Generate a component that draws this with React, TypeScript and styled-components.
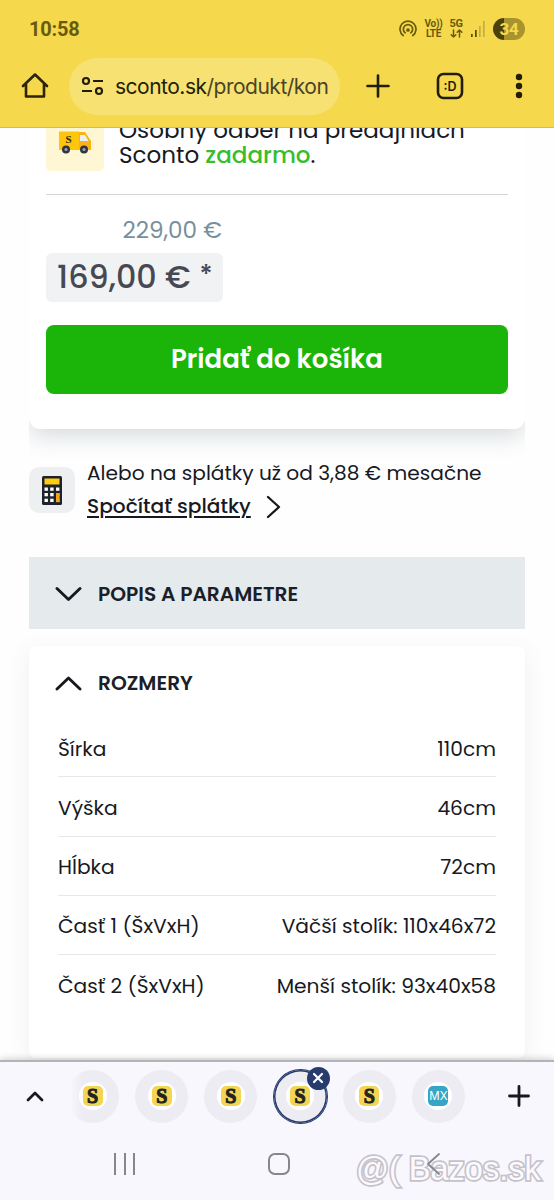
import React from "react";
import styled, { createGlobalStyle } from "styled-components";

const Global = createGlobalStyle`
  * { box-sizing: border-box; }
  body { margin: 0; background: #fff; font-family: Poppins, Inter, sans-serif; color: #17191f; }
`;
const Screen = styled.div`
  width: 554px; height: 1200px; overflow: hidden; display: flex; flex-direction: column; background: #fefefe;
`;
const Header = styled.header`
  height: 128px; flex: none; background: #f5d84c; border-bottom: 1px solid #d8bd42; z-index: 1;
`;
const StatusBar = styled.div`
  height: 57px; padding: 0 29px; display: flex; align-items: center; justify-content: space-between;
  color: #6a5a0c; font: 700 20px Roboto, sans-serif; letter-spacing: -0.2px;
`;
const StatusIcons = styled.div`display: flex; align-items: center;`;
const Stack = styled.div<{ $w: number; $ml: number; $size: number }>`
  width: ${p => p.$w}px; margin-left: ${p => p.$ml}px; display: flex; flex-direction: column; align-items: center;
  font: 700 ${p => p.$size}px/9.5px Roboto, sans-serif; white-space: nowrap; letter-spacing: -0.3px;
`;
const Battery = styled.div`
  width: 32px; height: 22px; border-radius: 11px; margin-left: 8px; display: grid; place-items: center;
  background: linear-gradient(90deg, #4d410a 0 11px, #a8942e 11px); color: #f5d84c;
  font: 700 17px/22px Roboto, sans-serif;
`;
const Toolbar = styled.div`height: 58px; display: flex; align-items: center; padding-left: 20px;`;
const Address = styled.div`
  width: 271px; height: 57px; margin: 0 23px 0 19px; border-radius: 29px; background: #f7e172; display: flex; align-items: center;
  padding-left: 12px; gap: 10px; font: 400 21px Inter, sans-serif; letter-spacing: -0.5px; color: #221d08; white-space: nowrap;
  span { color: #4b4425; }
`;
const Page = styled.main`height: 932px; flex: none; overflow: hidden; display: flex; flex-direction: column; align-items: center;`;
const BuyCard = styled.section`
  width: 496px; height: 301px; flex: none; padding: 0 17px; border-radius: 0 0 11px 11px; background: #fff;
  clip-path: inset(0 0 -30px 0); box-shadow: 0 6px 24px #3c505c38;
`;
const Delivery = styled.div`height: 67px; display: flex; gap: 15px; border-bottom: 1px solid #d4d7da;`;
const TruckTile = styled.div`
  width: 58px; height: 43px; background: #fff7d3; border-radius: 0 0 5px 5px; display: flex; justify-content: center;
`;
const DeliveryText = styled.p`
  margin: -10px 0 0; font-size: 23.05px; line-height: 25px; white-space: nowrap;
  b { font-weight: 500; color: #38bd2e; }
`;
const OldPrice = styled.div`
  width: 176px; height: 58px; padding-top: 20px; text-align: right; font-size: 23.1px; line-height: 30px; color: #78909c; font-weight: 400;
`;
const Price = styled.div`
  width: 177px; height: 49px; border-radius: 6px; background: #f1f2f4; color: #474952; display: flex; align-items: center;
  padding: 0 0 0 11px; font-size: 31.8px; font-weight: 500; white-space: nowrap; gap: 9px;
  sup { font-size: 26px; align-self: flex-start; line-height: 44px; }
`;
const BuyButton = styled.button`
  width: 462px; height: 69px; padding: 0; margin-top: 23px; border: 0; border-radius: 8px; background: #1ab508; color: #fff;
  font: 600 26px Poppins, Inter, sans-serif;
`;
const Installments = styled.section`width: 496px; height: 128px; flex: none; display: flex; align-items: flex-start; padding-top: 28px; gap: 12px;`;
const CalcTile = styled.div`width: 46px; height: 46px; margin-top: 10px; border-radius: 10px; background: #eeeff1; display: grid; place-items: center;`;
const InstText = styled.div`font-size: 20.15px; line-height: 33px; white-space: nowrap;`;
const LinkRow = styled.div`
  display: flex; align-items: center; gap: 15px; font-weight: 500;
  a { text-decoration: underline; text-underline-offset: 3px; text-decoration-thickness: 1.5px; }
`;
const Heading = styled.h2`
  margin: 0; height: 72px; padding: 2px 0 0 26px; display: flex; align-items: center; gap: 16px;
  font-size: 20.15px; font-weight: 600; color: #1b1f29;
`;
const Description = styled.section`width: 496px; flex: none; background: #e5eaed;`;
const Sizes = styled.section`
  width: 496px; height: 412px; flex: none; margin-top: 17px; border-radius: 7px; background: #fff; box-shadow: 0 6px 22px #50647018;
`;
const Table = styled.dl`margin: 0 29px;`;
const Row = styled.div`
  height: 59.25px; display: flex; align-items: center; justify-content: space-between; font-size: 20.2px;
  border-bottom: 1px solid #e6e7e9; padding-top: 3px; white-space: nowrap;
  &:first-child { padding-top: 4px; }
  &:last-child { border: 0; padding-top: 2px; }
  dd { margin: 0; }
`;
const Bottom = styled.footer`height: 140px; flex: none; background: #f9f7fe; border-top: 2px solid #b4b4b8; z-index: 1; box-shadow: 0 -1px 7px #0003;`;
const TabStrip = styled.div`height: 68px; display: flex; align-items: center; padding-left: 25px;`;
const Tabs = styled.div`display: flex; gap: 16.2px; margin: 0 43.5px 0 21px;`;
const Tab = styled.div<{ $state?: "active" | "faded" }>`
  width: 53px; height: 53px; border-radius: 50%; display: grid; place-items: center; position: relative;
  background: ${p => (p.$state === "faded" ? "linear-gradient(90deg, #f9f7fe 8%, #eeecf3 32%)" : "#eeecf3")};
  box-shadow: ${p => (p.$state === "active" ? "0 0 0 1px #273c6d, inset 0 0 0 1.5px #273c6d" : "none")};
`;
const Halo = styled.div`width: 28px; height: 28px; border-radius: 50%; background: #fff; display: grid; place-items: center;`;
const Favicon = styled.div<{ $mx?: boolean }>`
  width: 20px; height: 20px; border-radius: 5px; display: grid; place-items: center;
  background: ${p => (p.$mx ? "#35a6c6" : "#f3d553")}; color: ${p => (p.$mx ? "#fff" : "#22221f")};
  font: ${p => (p.$mx ? "400 11.5px/20px Inter, sans-serif" : "700 20px/20px 'Liberation Serif', serif")};
  -webkit-text-stroke: ${p => (p.$mx ? "0" : "1px #22221f")};
`;
const CloseBadge = styled.div`
  position: absolute; right: -3px; top: -3px; width: 23px; height: 23px; border-radius: 50%; background: #273c6d; display: grid; place-items: center;
`;
const SystemNav = styled.div`height: 68px; display: flex; align-items: center; padding-left: 114px; position: relative;
  > svg { z-index: 1; }
`;
const Recents = styled.div`width: 21px; height: 22px; border: solid #88868c; border-width: 0 2px; display: flex; justify-content: center;
  &::after { content: ""; width: 2px; background: #88868c; }
`;
const HomeKey = styled.div`width: 22px; height: 22px; margin: 0 136px 0 133px; border: 2px solid #88868c; border-radius: 7px;`;
const Watermark = styled.div`
  position: absolute; left: 356px; top: 19px; font: 400 32.5px/40px "Liberation Sans", sans-serif; white-space: nowrap;
  color: #fbfaff; -webkit-text-stroke: 3.4px #c5c2c9; paint-order: stroke fill;
`;

const Glyph = ({ w, h, d, sw = 2.6, color = "#17191f" }: { w: number; h: number; d: string; sw?: number; color?: string }) => (
  <svg width={w} height={h} viewBox={`0 0 ${w} ${h}`} fill="none" stroke={color} strokeWidth={sw} strokeLinecap="round" strokeLinejoin="round"><path d={d} /></svg>
);
const Truck = () => (
  <svg width="34" height="43" viewBox="0 0 34 43">
    <path d="M1 3.500h20V22H1z" fill="#fdc50b" /><path d="M21 4h6l6 9v9H21z" fill="#fbb216" /><path d="M22 7h5l3.500 6H22z" fill="#e9f1f5" />
    <circle cx="8" cy="21.500" r="4" fill="#303540" /><circle cx="26" cy="21.500" r="4" fill="#303540" />
    <circle cx="8" cy="21.500" r="1.600" fill="#9da3aa" /><circle cx="26" cy="21.500" r="1.600" fill="#9da3aa" />
    <text x="7.500" y="15" fontFamily="Liberation Serif, serif" fontWeight="700" fontSize="11" fill="#272515">S</text>
  </svg>
);
const Calculator = () => (
  <svg width="20" height="29" viewBox="0 0 20 29">
    <rect width="20" height="29" rx="1.5" fill="#1e222b" /><path d="M2.5 2.5h15v6h-15z" fill="#fdcd13" />
    {[11.5, 17, 22.7].map(y => [2.5, 8.2, 14].map(x => <rect key={`${x}-${y}`} x={x} y={y} width="3.4" height="3.3" fill="#fff" />))}
    <path d="M14 17h3.6v9.2H14z" fill="#f6a11c" />
  </svg>
);

const sizes = [
  ["Šírka", "110cm"],
  ["Výška", "46cm"],
  ["Hĺbka", "72cm"],
  ["Časť 1 (ŠxVxH)", "Väčší stolík: 110x46x72"],
  ["Časť 2 (ŠxVxH)", "Menší stolík: 93x40x58"],
];

export default function App() {
  return (
    <Screen>
      <Global />
      <Header>
        <StatusBar>
          <span>10:58</span>
          <StatusIcons>
            <svg width="18" height="18" viewBox="0 0 18 18" fill="none" stroke="#6a5a0c" strokeWidth="1.7" strokeLinecap="round">
              <path d="M4.2 15.5a8 8 0 1 1 9.6 0M6.2 12.8a4.6 4.6 0 1 1 5.6 0" /><circle cx="9" cy="10" r="1" fill="#6a5a0c" />
            </svg>
            <Stack $w={17} $ml={8} $size={10}><span>Vo))</span><span>LTE</span></Stack>
            <Stack $w={14} $ml={7} $size={11}><span>5G</span><Glyph w={13} h={9} d="M3.5 1v7M1.2 5.7L3.5 8l2.3-2.3M9.5 8V1M7.2 3.3L9.5 1l2.3 2.3" sw={1.5} color="#6a5a0c" /></Stack>
            <svg width="14" height="16" viewBox="0 0 14 16" style={{ marginLeft: 8 }}>
              <path d="M0 13h1.700v3H0zM4 9h1.700v7H4z" fill="#5a4c0a" /><path d="M8 5h1.700v11H8zM12 0h1.700v16h-1.700z" fill="#c6ae3e" />
            </svg>
            <Battery>34</Battery>
          </StatusIcons>
        </StatusBar>
        <Toolbar>
          <Glyph w={30} h={30} d="M3 15L15 3.5 27 15M6 13v12.5h18V13" color="#2b2406" />
          <Address>
            <svg width="24" height="20" viewBox="0 0 24 20" fill="none" stroke="#221d08" strokeWidth="2.2"><circle cx="5" cy="5" r="3" /><circle cx="18" cy="15" r="3" /><path d="M12 5h10M1 15h10" /></svg>
            <div>sconto.sk<span>/produkt/kon</span></div>
          </Address>
          <Glyph w={30} h={30} d="M15 4.500v21M4.500 15h21" color="#221d08" />
          <svg width="28" height="28" viewBox="0 0 28 28" style={{ marginLeft: 43 }}>
            <rect x="2" y="2" width="24" height="24" rx="5.500" fill="none" stroke="#221d08" strokeWidth="2.600" />
            <text x="14" y="18.500" textAnchor="middle" fontFamily="Inter, sans-serif" fontSize="12.500" fontWeight="600" fill="#221d08">:D</text>
          </svg>
          <svg width="8" height="26" viewBox="0 0 8 26" fill="#221d08" style={{ marginLeft: 51 }}><circle cx="4" cy="4" r="3.200" /><circle cx="4" cy="13" r="3.200" /><circle cx="4" cy="22" r="3.200" /></svg>
        </Toolbar>
      </Header>
      <Page>
        <BuyCard>
          <Delivery>
            <TruckTile><Truck /></TruckTile>
            <DeliveryText>Osobný odber na predajniach<br />Sconto <b>zadarmo</b>.</DeliveryText>
          </Delivery>
          <OldPrice>229,00 €</OldPrice>
          <Price>169,00 € <sup>*</sup></Price>
          <BuyButton>Pridať do košíka</BuyButton>
        </BuyCard>
        <Installments>
          <CalcTile><Calculator /></CalcTile>
          <InstText>
            Alebo na splátky už od 3,88 € mesačne
            <LinkRow><a>Spočítať splátky</a><Glyph w={15} h={24} d="M2 2l11 10L2 22" sw={2.3} /></LinkRow>
          </InstText>
        </Installments>
        <Description><Heading><Glyph w={27} h={16} d="M2 2.500l11.500 11L25 2.500" sw={2.9} />POPIS A PARAMETRE</Heading></Description>
        <Sizes>
          <Heading><Glyph w={27} h={16} d="M2 14L13.500 3 25 14" sw={2.9} />ROZMERY</Heading>
          <Table>
            {sizes.map(([k, v]) => <Row key={k}><dt>{k}</dt><dd>{v}</dd></Row>)}
          </Table>
        </Sizes>
      </Page>
      <Bottom>
        <TabStrip>
          <Glyph w={20} h={14} d="M3 11l7-7 7 7" sw={2.8} />
          <Tabs>
            {["faded", "", "", "active", "", "mx"].map((s, i) => (
              <Tab key={i} $state={s === "faded" || s === "active" ? s : undefined}>
                <Halo><Favicon $mx={s === "mx"}>{s === "mx" ? "MX" : "S"}</Favicon></Halo>
                {s === "active" && <CloseBadge><Glyph w={12} h={12} d="M2 2l8 8M10 2l-8 8" sw={2.2} color="#fff" /></CloseBadge>}
              </Tab>
            ))}
          </Tabs>
          <Glyph w={22} h={22} d="M11 1.500v19M1.500 11h19" sw={2.8} />
        </TabStrip>
        <SystemNav>
          <Recents /><HomeKey />
          <Glyph w={15} h={24} d="M13 2L2 12l11 10" sw={1.8} color="#88868c" />
          <Watermark>@( Bazos.sk</Watermark>
        </SystemNav>
      </Bottom>
    </Screen>
  );
}
